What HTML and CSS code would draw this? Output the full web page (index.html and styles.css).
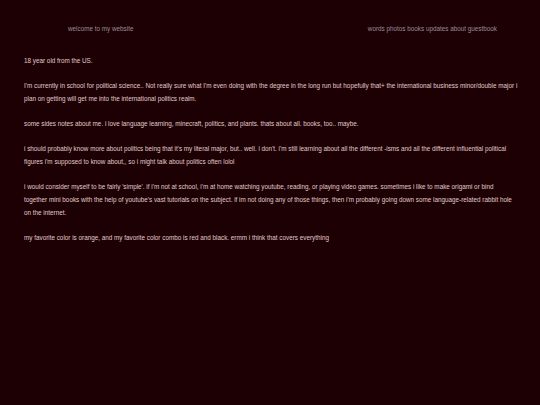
FILE: index.html
```html
<!DOCTYPE html>
<html lang="en">
<head>
<meta charset="utf-8">
<title>welcome to my website</title>
<link rel="stylesheet" href="styles.css">
</head>
<body>
<header class="site-header">
  <div class="site-title">welcome to my website</div>
  <nav class="site-nav">
    <a href="#">words</a>
    <a href="#">photos</a>
    <a href="#">books</a>
    <a href="#">updates</a>
    <a href="#">about</a>
    <a href="#">guestbook</a>
  </nav>
</header>
<main class="content">
  <p>18 year old from the US.</p>
  <p>I'm currently in school for political science.. Not really sure what I'm even doing with the degree in the long run but hopefully that+ the international business minor/double major i plan on getting will get me into the international politics realm.</p>
  <p>some sides notes about me. i love language learning, minecraft, politics, and plants. thats about all. books, too.. maybe.</p>
  <p>i should probably know more about politics being that it's my literal major, but.. well. i don't. i'm still learning about all the different -isms and all the different influential political figures i'm supposed to know about,, so i might talk about politics often lolol</p>
  <p>i would consider myself to be fairly 'simple'. if i'm not at school, i'm at home watching youtube, reading, or playing video games. sometimes i like to make origami or bind together mini books with the help of youtube's vast tutorials on the subject. if im not doing any of those things, then i'm probably going down some language-related rabbit hole on the internet.</p>
  <p>my favorite color is orange, and my favorite color combo is red and black. ermm i think that covers everything</p>
</main>
</body>
</html>
```
FILE: styles.css
```css
html, body {
  margin: 0;
  padding: 0;
  background: #1c0004;
}
body {
  font-family: "Liberation Sans", Arial, sans-serif;
  font-size: 6.33px;
  line-height: 2;
  color: #e2caca;
  min-height: 405px;
}
.site-header {
  display: flex;
  justify-content: space-between;
  padding: 22.7px 43px 0 68px;
  color: #9c8c96;
}
.site-nav {
  display: flex;
  gap: 0.28em;
}
.site-nav a {
  color: #9c8c96;
  text-decoration: none;
}
.content {
  padding: 19.3px 22px 0 24px;
}
.content p {
  margin: 0 0 12.66px 0;
}
```
